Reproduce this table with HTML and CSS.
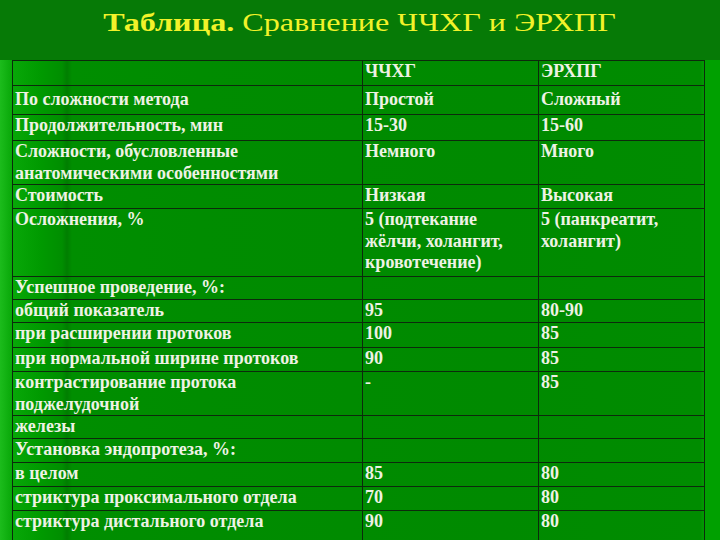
FILE: index.html
```html
<!DOCTYPE html>
<html>
<head>
<meta charset="utf-8">
<title>Таблица. Сравнение ЧЧХГ и ЭРХПГ</title>
<link rel="stylesheet" href="styles.css">
</head>
<body>
<div class="slide">
  <div class="head">
    <h1 class="title"><b>Таблица.</b> Сравнение ЧЧХГ и ЭРХПГ</h1>
  </div>
  <table class="grid">
    <colgroup><col class="c1"><col class="c2"><col class="c3"></colgroup>
    <tr class="h25"><td></td><td>ЧЧХГ</td><td>ЭРХПГ</td></tr>
    <tr class="h29"><td class="mid">По сложности метода</td><td class="mid">Простой</td><td class="mid">Сложный</td></tr>
    <tr class="h26"><td>Продолжительность, мин</td><td>15-30</td><td>15-60</td></tr>
    <tr class="h43"><td>Сложности, обусловленные<br>анатомическими особенностями</td><td>Немного</td><td>Много</td></tr>
    <tr class="h24"><td>Стоимость</td><td>Низкая</td><td>Высокая</td></tr>
    <tr class="h68"><td>Осложнения, %</td><td>5 (подтекание<br>жёлчи, холангит,<br>кровотечение)</td><td>5 (панкреатит,<br>холангит)</td></tr>
    <tr class="h23"><td>Успешное проведение, %:</td><td></td><td></td></tr>
    <tr class="h23"><td>общий показатель</td><td>95</td><td>80-90</td></tr>
    <tr class="h25"><td>при расширении протоков</td><td>100</td><td>85</td></tr>
    <tr class="h24"><td>при нормальной ширине протоков</td><td>90</td><td>85</td></tr>
    <tr class="h43"><td>контрастирование протока<br>поджелудочной</td><td>-</td><td>85</td></tr>
    <tr class="h22"><td>железы</td><td></td><td></td></tr>
    <tr class="h24"><td>Установка эндопротеза, %:</td><td></td><td></td></tr>
    <tr class="h24"><td>в целом</td><td>85</td><td>80</td></tr>
    <tr class="h24"><td>стриктура проксимального отдела</td><td>70</td><td>80</td></tr>
    <tr class="h40"><td>стриктура дистального отдела</td><td>90</td><td>80</td></tr>
  </table>
</div>
</body>
</html>
```

FILE: styles.css
```css
html, body {
  margin: 0;
  padding: 0;
}
body {
  width: 720px;
  height: 540px;
  overflow: hidden;
  background: #008a00;
  font-family: "Liberation Serif", serif;
}
.slide {
  width: 720px;
  height: 540px;
  overflow: hidden;
  background: linear-gradient(90deg, #1cbc1c 0px, #08a808 12px, #009a00 40px, #008e00 62px, #007e00 67px, #008e00 72px, #008c00 200px, #008a00 500px, #008c00 700px, #00a000 705px, #00a000 720px);
}
.head {
  height: 60px;
  background: #067a06;
  display: flex;
  justify-content: center;
}
.title {
  margin: 0;
  padding-top: 8px;
  font-family: "Liberation Serif", serif;
  font-size: 25px;
  line-height: 30px;
  font-weight: normal;
  color: #f2f22a;
  white-space: nowrap;
  transform: scaleX(1.285);
  transform-origin: 50% 0;
}
.title b {
  font-weight: bold;
}
.grid {
  margin-left: 12px;
  border-collapse: collapse;
  table-layout: fixed;
  width: 692px;
  color: #eef2e4;
  font-family: "Liberation Serif", serif;
  font-size: 18px;
  line-height: 21.6px;
  font-weight: bold;
}
.c1 { width: 350px; }
.c2 { width: 176px; }
.c3 { width: 166px; }
.grid td {
  border: 1px solid #0c2a0c;
  padding: 0 2px 0 2px;
  vertical-align: top;
  overflow: hidden;
  white-space: nowrap;
}
.grid td.mid {
  padding-top: 3px;
}
.h22 { height: 22px; }
.h23 { height: 23px; }
.h24 { height: 24px; }
.h25 { height: 25px; }
.h26 { height: 26px; }
.h29 { height: 29px; }
.h40 { height: 40px; }
.h43 { height: 43px; }
.h68 { height: 68px; }
```
